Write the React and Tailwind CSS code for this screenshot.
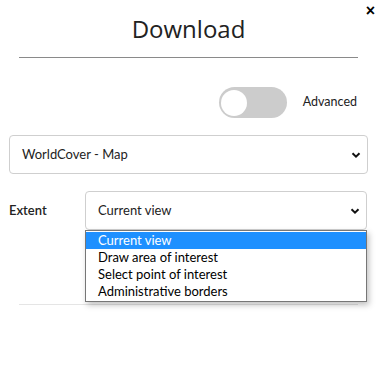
export default function App() {
  const opts = ["Current view", "Draw area of interest", "Select point of interest", "Administrative borders"];
  return (
    <div className="relative w-[377px] h-[392px] bg-white overflow-hidden" style={{ fontFamily: "Lato, 'Open Sans', sans-serif" }}>
      <button className="absolute right-[2px] top-[1px] text-[16px] leading-[20px] font-bold text-black" style={{ fontFamily: "'Liberation Sans', Arial, sans-serif" }}>
        ×
      </button>
      <h2 className="mt-[17px] text-center text-[24px] leading-[24px] font-normal text-[#222]" style={{ fontFamily: "'Open Sans', 'Noto Sans', sans-serif" }}>
        Download
      </h2>
      <div className="mx-[19px] mt-[16px] h-px bg-[#8a8a8a]" />

      <div className="mt-[29px] flex items-center justify-end pr-[20px] gap-[16px]">
        <div className="w-[68px] h-[31px] rounded-full bg-[#cccccc] flex items-center pl-[2px]">
          <div className="w-[26px] h-[26px] rounded-full bg-white" />
        </div>
        <span className="text-[12.5px] text-[#222]">Advanced</span>
      </div>

      <div className="mt-[17px] mx-[9px] h-[39px] border border-[#cfcfcf] rounded-[4px] flex items-center justify-between pl-[12px] pr-[5px]">
        <span className="text-[13px] text-[#222]">WorldCover - Map</span>
        <Chevron />
      </div>

      <div className="mt-[17px] flex items-center pl-[9px] pr-[10px]">
        <span className="w-[76px] text-[13px] font-semibold text-[#222]">Extent</span>
        <div className="relative flex-1">
          <div className="h-[39px] border border-[#cfcfcf] rounded-[4px] flex items-center justify-between pl-[12px] pr-[5px]">
            <span className="text-[13px] text-[#222]">Current view</span>
            <Chevron />
          </div>
          <div className="absolute left-0 right-0 top-full border border-[#767676] bg-white shadow-[2px_3px_6px_rgba(0,0,0,0.25)] z-10 py-px">
            {opts.map((o, i) => (
              <div
                key={o}
                className={
                  "h-[17px] leading-[17px] pl-[12px] text-[13px] " +
                  (i === 0 ? "bg-[#1e90ff] text-white" : "text-black")
                }
              >
                {o}
              </div>
            ))}
          </div>
        </div>
      </div>

      <div className="mx-[19px] mt-[74px] h-px bg-[#e5e5e5]" />
    </div>
  );
}

function Chevron() {
  return (
    <svg width="10" height="8" viewBox="0 0 10 8" className="mr-[1px]">
      <path d="M1.5 2.2 L5 5.6 L8.5 2.2" fill="none" stroke="#111" strokeWidth="2" />
    </svg>
  );
}
